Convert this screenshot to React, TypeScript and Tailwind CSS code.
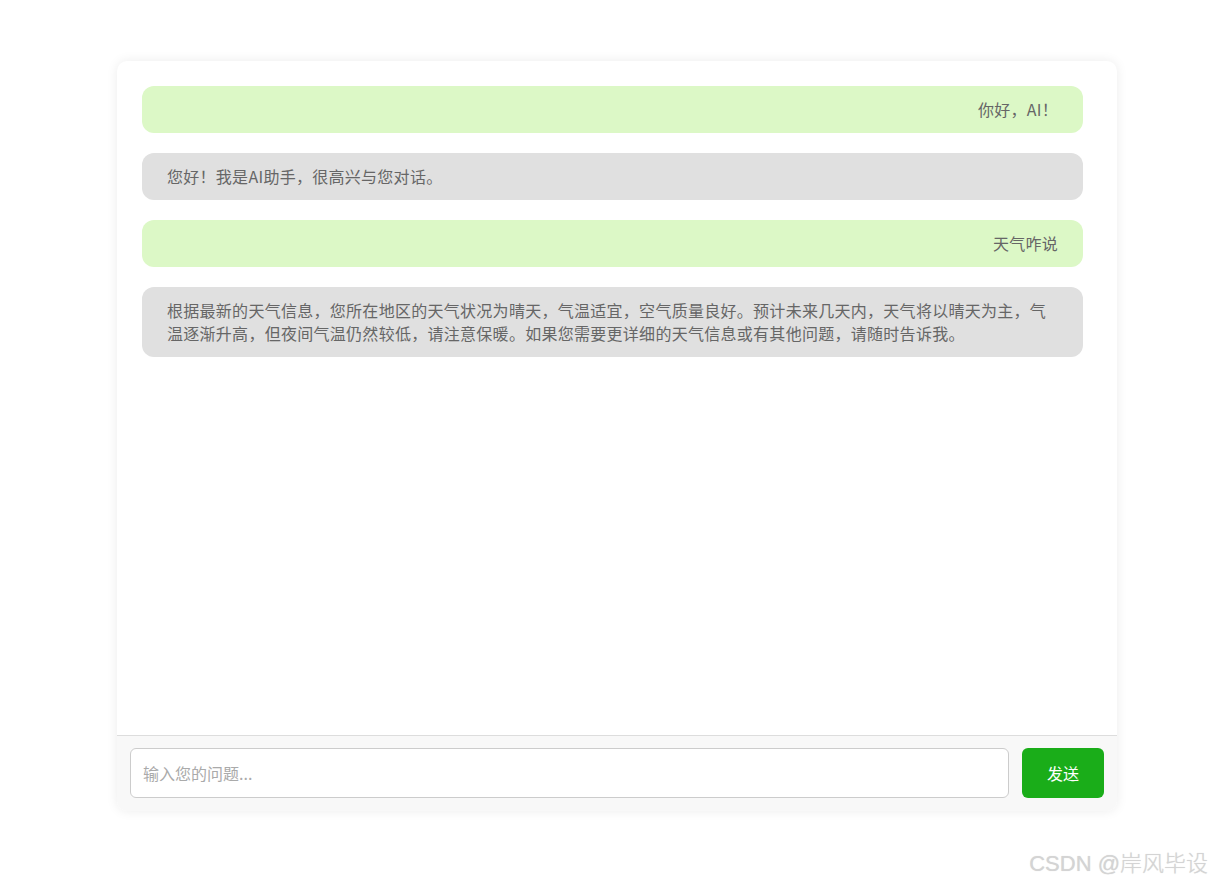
import { useState } from "react";

type Msg = { role: "user" | "ai"; text: string };

const initial: Msg[] = [
  { role: "user", text: "你好，AI！" },
  { role: "ai", text: "您好！我是AI助手，很高兴与您对话。" },
  { role: "user", text: "天气咋说" },
  {
    role: "ai",
    text: "根据最新的天气信息，您所在地区的天气状况为晴天，气温适宜，空气质量良好。预计未来几天内，天气将以晴天为主，气温逐渐升高，但夜间气温仍然较低，请注意保暖。如果您需要更详细的天气信息或有其他问题，请随时告诉我。",
  },
];

export default function App() {
  const [messages] = useState<Msg[]>(initial);
  const [input, setInput] = useState("");

  return (
    <div
      className="relative min-h-[885px] bg-white pt-[61px] pl-[117px]"
      style={{ fontFamily: '"Microsoft YaHei", "Noto Sans CJK SC", "Noto Sans", sans-serif' }}
    >
      <div className="flex h-[750px] w-[1000px] flex-col overflow-hidden rounded-[10px] bg-white shadow-[0_0_12px_rgba(0,0,0,0.08)]">
        <div className="flex flex-1 flex-col gap-5 overflow-y-auto pt-[25px] pb-[25px] pl-[25px] pr-[34px]">
          {messages.map((m, i) => (
            <div
              key={i}
              className={
                m.role === "user"
                  ? "rounded-xl bg-[#dcf8c6] px-[25px] py-3 text-right text-base leading-[23px] tracking-[0.28px] text-[#666]"
                  : "rounded-xl bg-[#e0e0e0] px-[25px] py-3 text-left text-base leading-[23px] tracking-[0.28px] text-[#666]"
              }
            >
              {m.text}
            </div>
          ))}
        </div>
        <div className="flex items-center gap-[13px] border-t border-[#ddd] bg-[#f8f8f8] px-[13px] pt-3 pb-[13px]">
          <input
            value={input}
            onChange={(e) => setInput(e.target.value)}
            placeholder="输入您的问题..."
            className="h-[50px] flex-1 rounded-[6px] border border-[#ccc] bg-white px-3 text-base text-[#333] outline-none placeholder:text-[#aaa]"
          />
          <button className="h-[50px] w-[82px] rounded-[6px] bg-[#1aad19] text-base text-white">
            发送
          </button>
        </div>
      </div>
      <div
        className="absolute right-[4px] bottom-[5px] text-[22px] font-light text-[#d4d4d4] [text-shadow:0_0_1px_rgba(0,0,0,0.15)]"
        style={{ fontFamily: '"Liberation Sans", "Noto Sans CJK SC", sans-serif' }}
      >
        CSDN @岸风毕设
      </div>
    </div>
  );
}
